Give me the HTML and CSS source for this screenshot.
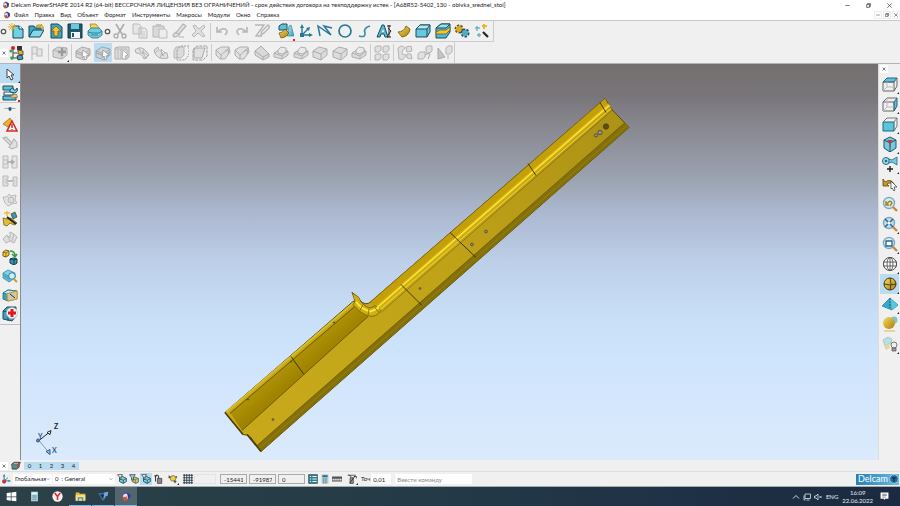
FILE: index.html
```html
<!DOCTYPE html>
<html lang="ru">
<head>
    <meta charset="UTF-8">
    <meta name="viewport" content="width=device-width, initial-scale=1.0">
    <title>Delcam PowerSHAPE 2014 R2</title>
    <link rel="stylesheet" href="styles.css">
</head>
<body>
    <!-- Icon sprite -->
    <svg class="sprite" aria-hidden="true">
        <defs>
            <linearGradient id="g-gold" x1="0" y1="0" x2="1" y2="1">
                <stop offset="0" stop-color="#f6dc63"/>
                <stop offset="1" stop-color="#a87d0c"/>
            </linearGradient>
            <linearGradient id="g-cyan" x1="0" y1="0" x2="1" y2="1">
                <stop offset="0" stop-color="#b5ebf5"/>
                <stop offset="1" stop-color="#2fa5c8"/>
            </linearGradient>
        </defs>
        <symbol id="i-app" viewBox="0 0 16 16">
            <path d="M3 4l5-3 5 3v8l-5 3-5-3z" fill="#4a55a8"/>
            <circle cx="7" cy="8" r="4" fill="#e8e4f2"/>
            <path d="M2 9l6-1 2 5-5 2z" fill="#d0582f"/>
            <path d="M9 3l5 2-1 6-3-1z" fill="#2f3c92"/>
        </symbol>
        <symbol id="i-grip" viewBox="0 0 16 16"><circle cx="8" cy="8" r="5" fill="#fff" stroke="#555" stroke-width="3"/></symbol>
        <symbol id="i-close" viewBox="0 0 16 16"><path d="M4 4l8 8M12 4l-8 8" stroke="#555" stroke-width="2"/></symbol>
        <symbol id="i-new" viewBox="0 0 16 16">
            <path d="M5 3h6l4 3v9H5z" fill="#74cfe2" stroke="#12485a"/>
            <path d="M11 3v3h4" fill="#fff" stroke="#12485a"/>
            <path d="M4 0v8M0 4h8M1 1l6 6M7 1L1 7" stroke="#e3b62b"/>
        </symbol>
        <symbol id="i-open" viewBox="0 0 16 16">
            <path d="M1 14V3h5l1 2h6v3" fill="#3fa7c4" stroke="#12485a"/>
            <path d="M1 14l4-7h11l-4 7z" fill="#83d8e8" stroke="#12485a"/>
            <path d="M8 3q3-3 5 0V1l3 4-4 1 1-1Q11 2 8 4z" fill="#efc12f" stroke="#8a6a10" stroke-width=".5"/>
        </symbol>
        <symbol id="i-import" viewBox="0 0 16 16">
            <path d="M3 1h7l4 3v11H3z" fill="#45a4bd" stroke="#12485a"/>
            <path d="M8 3l5 5h-3v5H6V8H3z" fill="#f2c532" stroke="#6a5210" stroke-width=".7"/>
        </symbol>
        <symbol id="i-save" viewBox="0 0 16 16">
            <path d="M1 1h14v14H1z" fill="#20596b" stroke="#123846"/>
            <path d="M4 1h8v5H4z" fill="#6cc8dc"/><path d="M4 9h9v6H4z" fill="#eef6f8"/>
            <path d="M5 10h2v4H5z" fill="#20596b"/>
        </symbol>
        <symbol id="i-print" viewBox="0 0 16 16">
            <path d="M4 6L3 1h6l4 5z" fill="#f3d24e" stroke="#8a6a10" stroke-width=".6"/>
            <path d="M1 8l3-3h8l3 3v4l-4 3H5l-4-3z" fill="#6fcde1" stroke="#2a7088" stroke-width=".8"/>
            <path d="M1 9l4 1h7l3-2M4 12h7" fill="none" stroke="#2a7088" stroke-width=".8"/>
        </symbol>
        <symbol id="i-cut" viewBox="0 0 16 16">
            <path d="M4 1l6 10M12 1L6 11" stroke="#999" stroke-width="1.5"/>
            <circle cx="4" cy="13" r="2" fill="none" stroke="#999" stroke-width="1.3"/><circle cx="12" cy="13" r="2" fill="none" stroke="#999" stroke-width="1.3"/>
        </symbol>
        <symbol id="i-copy" viewBox="0 0 16 16">
            <path d="M1 1h6l2 2v8H1zM7 5h6l2 2v8H7z" fill="#e4e4e4" stroke="#b0b0b0"/>
            <path d="M9 9h4M9 11h4M9 13h4" stroke="#bbb" stroke-width=".7"/>
        </symbol>
        <symbol id="i-paste" viewBox="0 0 16 16">
            <path d="M1 3h11v11H1z" fill="#d4d4d4" stroke="#aaa"/><path d="M4 1h5v3H4z" fill="#bbb"/>
            <path d="M7 6h6l2 2v7H7z" fill="#ececec" stroke="#b0b0b0"/>
        </symbol>
        <symbol id="i-brush" viewBox="0 0 16 16"><path d="M12 1l3 2-7 8-3-1zM5 9l-3 3 1 2 4-1 2-2M8 14h5" fill="#ddd" stroke="#a5a5a5" stroke-width="1.2"/></symbol>
        <symbol id="i-delete" viewBox="0 0 16 16"><path d="M2 3l2-1 4 4 5-4 1 2-4 4 4 5-2 1-5-4-4 4-2-2 4-4z" fill="#ddd" stroke="#aaa"/></symbol>
        <symbol id="i-undo" viewBox="0 0 16 16"><path d="M3 4v5h5M4 9q3-4 7-3 4 2 0 6" fill="none" stroke="#a8a8a8" stroke-width="1.6"/></symbol>
        <symbol id="i-redo" viewBox="0 0 16 16"><path d="M13 4v5H8M12 9q-3-4-7-3-4 2 0 6" fill="none" stroke="#a8a8a8" stroke-width="1.6"/></symbol>
        <symbol id="i-edit" viewBox="0 0 16 16"><path d="M1 2h9L2 13h6M7 12l1-4 6-6 2 2-6 6z" fill="none" stroke="#a8a8a8" stroke-width="1.4"/></symbol>
        <symbol id="i-model" viewBox="0 0 16 16">
            <path d="M1 3l3-2h5v6H1z" fill="#62bfd5" stroke="#174f63"/>
            <path d="M11 3l2-1 3 11H9z" fill="url(#g-cyan)" stroke="#2a7590" stroke-width=".6"/>
            <path d="M1 10q4 0 6-4l4 4q-3 5-8 5z" fill="url(#g-gold)" stroke="#69500c" stroke-width=".7"/>
        </symbol>
        <symbol id="i-wplane" viewBox="0 0 16 16">
            <path d="M4 12V3M4 12h9M4 12l6-6" stroke="#24789a" stroke-width="1.4"/>
            <path d="M4 1l2 4H2zM15 12l-4 2v-4zM12 4l-1 4-3-3zM2 10h4v4H2z" fill="#24789a"/>
        </symbol>
        <symbol id="i-line" viewBox="0 0 16 16"><path d="M3 13L1 3l13 9-7-9 8 2" fill="none" stroke="#24789a" stroke-width="1.5"/></symbol>
        <symbol id="i-arc" viewBox="0 0 16 16"><circle cx="8" cy="8" r="6" fill="none" stroke="#24789a" stroke-width="1.7"/></symbol>
        <symbol id="i-curve" viewBox="0 0 16 16"><path d="M3 13q7 2 6-3-2-5 5-7" fill="none" stroke="#2e8cab" stroke-width="1.6"/></symbol>
        <symbol id="i-text" viewBox="0 0 16 16">
            <path d="M1 14L6 2h2l4 12H9l-1-3H5l-1 3z" fill="#56b7cf" stroke="#174f63"/><path d="M6 9l1-3 1 3z" fill="#fff"/>
            <path d="M13 2v12M11 3h4M11 14h4M12 5l3 3-3 4" fill="none" stroke="#222"/>
        </symbol>
        <symbol id="i-surf" viewBox="0 0 16 16"><path d="M2 9q6 0 8-6l4 3q-1 7-8 8z" fill="url(#g-gold)" stroke="#8a6a10"/></symbol>
        <symbol id="i-solid" viewBox="0 0 16 16">
            <path d="M1 6l4-4h10v7l-3 5H1z" fill="#67c8de" stroke="#1c4c5d"/><path d="M1 6l4-4h10l-3 4z" fill="#b3e9f3" stroke="#1c4c5d"/>
            <path d="M12 6v8" stroke="#1c4c5d"/>
        </symbol>
        <symbol id="i-feat" viewBox="0 0 16 16">
            <path d="M1 5l5-4h9v8l-4 6H1z" fill="#54b9d0" stroke="#1c4c5d"/><path d="M1 5l5-4h9l-4 4z" fill="#98dfec" stroke="#1c4c5d"/>
            <path d="M1 9l4-2h6l4-3v3l-4 4H1z" fill="#f0c531" stroke="#69500c" stroke-width=".7"/>
        </symbol>
        <symbol id="i-gears" viewBox="0 0 16 16">
            <circle cx="5" cy="6" r="3" fill="none" stroke="#6b510e" stroke-width="3" stroke-dasharray="2 1"/><circle cx="5" cy="6" r="3" fill="#d9a826"/>
            <circle cx="11" cy="10" r="3" fill="none" stroke="#174f63" stroke-width="3" stroke-dasharray="2 1"/><circle cx="11" cy="10" r="3" fill="#4cadc7"/>
        </symbol>
        <symbol id="i-wand" viewBox="0 0 16 16">
            <path d="M9 9l5 5" stroke="#222" stroke-width="2.2"/><path d="M10 1v5M8 3h5" stroke="#e5b92d" stroke-width="2"/>
            <path d="M3 3v5M1 5h5M5 10v4M3 12h4" stroke="#6db4c4" stroke-width="1.5"/>
        </symbol>
        <symbol id="i-tree" viewBox="0 0 16 16">
            <path d="M4 4v9h5M4 8h4" fill="none" stroke="#444"/><circle cx="4" cy="3" r="2" fill="#d0242c"/><circle cx="2" cy="6" r="1.6" fill="#3aa24a"/>
            <path d="M8 1h5v4H8z" fill="#333"/><path d="M9 5l5 1v4l-5-1z" fill="#e0b42c" stroke="#333" stroke-width=".8"/>
            <path d="M8 11l5-1 1 4-5 1z" fill="#3b9fba" stroke="#222" stroke-width=".8"/><path d="M1 12l3-1 1 3-3 1z" fill="#3aa24a"/>
        </symbol>
        <symbol id="i-flag" viewBox="0 0 16 16"><path d="M3 15V2h5v2h5v7H8V9H3M8 2v9" fill="#e3e3e3" stroke="#b0b0b0" stroke-width="1.2"/></symbol>
        <symbol id="i-gcross" viewBox="0 0 16 16">
            <path d="M1 5l5-3 9 1v7l-5 4-9-2z" fill="#d2d2d2" stroke="#a0a0a0"/><path d="M1 5l9 2 5-4M10 7v7" fill="none" stroke="#a0a0a0"/>
            <path d="M10 3v8M6 7h8" stroke="#858585" stroke-width="2.4"/>
        </symbol>
        <symbol id="i-gbox" viewBox="0 0 16 16">
            <path d="M1 6l6-4 8 2v6l-6 5-8-3z" fill="#d8d8d8" stroke="#9c9c9c"/><path d="M1 6l8 3 6-5M9 9v6" fill="none" stroke="#9c9c9c"/>
        </symbol>
        <symbol id="i-gboxcur" viewBox="0 0 16 16">
            <path d="M1 6l6-4 8 2v6l-6 5-8-3z" fill="#d0d0d0" stroke="#999"/><path d="M1 6l8 3 6-5M1 8l8 3 6-4" fill="none" stroke="#999"/>
            <path d="M8 5l6 5-3 1 1 3-2 1-1-4-2 2z" fill="#fff" stroke="#777" stroke-width=".7"/>
        </symbol>
        <symbol id="i-gpanel" viewBox="0 0 16 16">
            <path d="M1 3l3-1h11v10l-2 2H1z" fill="#ddd" stroke="#a0a0a0"/><path d="M4 4v10M7 4v10M1 4h12v10" fill="none" stroke="#a8a8a8"/>
            <path d="M9 5l5 5-3 1 1 3-2 0-2-1z" fill="#fff" stroke="#888" stroke-width=".7"/>
        </symbol>
        <symbol id="i-gbend" viewBox="0 0 16 16">
            <path d="M1 5q6-5 11 1l3 4-5 4q-2-6-8-6z" fill="#ddd" stroke="#a0a0a0"/><path d="M5 3l2 5M10 4l-2 5" stroke="#a8a8a8"/>
            <path d="M9 7l5 4-2 1v2z" fill="#fff" stroke="#888" stroke-width=".7"/>
        </symbol>
        <symbol id="i-gbend2" viewBox="0 0 16 16">
            <path d="M1 5l4-3q0 5 9 6l1 5q-12 3-14-8z" fill="#ddd" stroke="#a0a0a0"/><path d="M9 7l-2 6M5 5l-3 3" stroke="#a8a8a8"/>
            <path d="M8 4l4 4-2 1v2z" fill="#fff" stroke="#888" stroke-width=".7"/>
        </symbol>
        <symbol id="i-gdash" viewBox="0 0 16 16">
            <path d="M3 2h8v8l-3 3H1V6z" fill="#d6d6d6" stroke="#aaa"/><path d="M4 5l3-4h9v9l-4 5H4z" fill="none" stroke="#888" stroke-dasharray="2 1"/>
        </symbol>
        <symbol id="i-gdash2" viewBox="0 0 16 16">
            <path d="M2 3h11l-3 10H2z" fill="#ddd" stroke="#999"/><path d="M1 5l4-4h10v10l-4 4H1z" fill="none" stroke="#888" stroke-dasharray="3 1"/>
        </symbol>
        <symbol id="i-gcut" viewBox="0 0 16 16">
            <path d="M1 5l5-3h8l1 5-5 7-5 0-4-4z" fill="#ddd" stroke="#a0a0a0"/><path d="M1 5l5 5 8-7M6 10v4M10 6l4-1-1 4" fill="none" stroke="#a0a0a0"/>
        </symbol>
        <symbol id="i-gwedge" viewBox="0 0 16 16">
            <path d="M1 6l6-5 8 8v3l-6 3-8-5z" fill="#d4d4d4" stroke="#999"/><path d="M1 6l8 6 6-3M9 12v3" fill="none" stroke="#999"/>
        </symbol>
        <symbol id="i-gslab" viewBox="0 0 16 16">
            <path d="M1 8l5-3 9 1v4l-6 4-8-2z" fill="#d6d6d6" stroke="#a0a0a0"/><path d="M1 8l8 3 6-5M9 11v3" fill="none" stroke="#a0a0a0"/>
            <path d="M5 5l3-3 5 1v4l-4 2-4-1z" fill="#e8e8e8" stroke="#a0a0a0"/>
        </symbol>
        <symbol id="i-gcubes" viewBox="0 0 16 16">
            <path d="M1 2l2-1h4v4L5 7H1zM9 2l2-1h4v4l-2 2H9zM1 10l2-1h4v4l-2 2H1zM9 10l2-1h4v4l-2 2H9z" fill="#ddd" stroke="#a5a5a5"/>
        </symbol>
        <symbol id="i-gbool" viewBox="0 0 16 16">
            <path d="M1 3q4-4 7 0-4 3-3 6l4 1q-2 6-7 4zM9 2l5-1 1 5-5 1zM10 9l4 0 1 5-5-1z" fill="#ddd" stroke="#a5a5a5"/>
        </symbol>
        <symbol id="i-gpair" viewBox="0 0 16 16">
            <path d="M1 9l2-2h5v5l-2 2H1zM9 2l2-1h4v5l-2 2H9z" fill="#ddd" stroke="#a5a5a5"/><path d="M8 10l5-2M11 14l2-5" stroke="#999"/>
        </symbol>
        <symbol id="i-gcone" viewBox="0 0 16 16">
            <path d="M1 3l7 9-7 2z" fill="#bbb" stroke="#999"/><path d="M9 3l2-2h4v6l-2 2H9zM11 10v4" fill="#ddd" stroke="#a5a5a5"/>
        </symbol>
        <symbol id="i-arrow" viewBox="0 0 16 16"><path d="M5 3v9l2-2 2 4 2-1-2-4h3z" fill="#fff" stroke="#444"/></symbol>
        <symbol id="i-filter" viewBox="0 0 16 16">
            <path d="M1 1h10v4H1zM1 11h13v4H1z" fill="#62bfd5" stroke="#174f63"/><path d="M2 7h9v3H2z" fill="#fff" stroke="#1d5468"/>
            <path d="M8 5q2-3 3-2l1 2 2 0 1-2q2 3-2 5l-5-1z" fill="#7fcfe0" stroke="#174f63"/><path d="M8 11l6-2 2 3-5 1z" fill="#e3c487" stroke="#7b5a22" stroke-width=".6"/>
        </symbol>
        <symbol id="i-slider" viewBox="0 0 16 16"><path d="M0 8h16" stroke="#888"/><path d="M6 6h4l0 4-2 2-2-2z" fill="#1f5b78"/></symbol>
        <symbol id="i-warn" viewBox="0 0 16 16">
            <path d="M1 8l7-6 2 4-4 5z" fill="#e9b42f" stroke="#7b5a12" stroke-width=".6"/>
            <path d="M10 5l5 10H5z" fill="#fff" stroke="#d62a26" stroke-width="1.6"/><path d="M10 8v4M10 13v1" stroke="#b01c1a" stroke-width="1.3"/>
        </symbol>
        <symbol id="i-gtrim" viewBox="0 0 16 16"><path d="M1 3l3-1 6 6-2 2zM9 9l3-5 3 4 0 4-5 2-3-2z" fill="#ddd" stroke="#a5a5a5" stroke-width="1.1"/></symbol>
        <symbol id="i-gtrans" viewBox="0 0 16 16"><path d="M1 2h5v12H1zM10 2h5v12h-5zM1 6h5M1 10h5" fill="#e2e2e2" stroke="#aeaeae"/><path d="M5 8h6M9 6l3 2-3 2" fill="none" stroke="#999" stroke-width="1.3"/></symbol>
        <symbol id="i-gmirror" viewBox="0 0 16 16"><path d="M1 3h5v3H4v4h2v3H1zM15 4h-4v3h1v3h-1v3h4z" fill="#ddd" stroke="#aeaeae"/><path d="M5 8h6" stroke="#999" stroke-width="1.5"/></symbol>
        <symbol id="i-gmorph" viewBox="0 0 16 16"><path d="M1 5l4 0 2-3 2 2 5-1-1 5 2 3-5 1-4 2-3-3z" fill="#e0e0e0" stroke="#aeaeae"/><circle cx="9" cy="8" r="3" fill="#d8d8d8" stroke="#aaa"/></symbol>
        <symbol id="i-magic" viewBox="0 0 16 16">
            <path d="M9 3l4-2 2 5-4 2z" fill="#3c97b3" stroke="#454208" stroke-width=".7"/><path d="M1 7l4 1 4-1 6 5-3 2-4-2-3 3-3-1z" fill="#e3bb32" stroke="#6b510e" stroke-width=".7"/>
            <path d="M5 6l9 7" stroke="#222" stroke-width="2"/><path d="M5 0v5M2 2h6" stroke="#ecbc31" stroke-width="1.4"/>
        </symbol>
        <symbol id="i-gwrap" viewBox="0 0 16 16"><path d="M1 9l4-4 3 3V2l4 2 3 3-3 6-4-2-4 2z" fill="#dcdcdc" stroke="#a9a9a9"/><path d="M5 5l3 6M12 4l-2 7" stroke="#aaa"/></symbol>
        <symbol id="i-convert" viewBox="0 0 16 16">
            <path d="M1 3l3-2 3 1v4l-3 2-3-1z" fill="#f0cb47" stroke="#7a600f"/><path d="M1 3l3 1 3-2M4 4v4" fill="none" stroke="#7a600f" stroke-width=".8"/>
            <path d="M8 2q5 0 5 5M10 5l3 3 2-3" fill="none" stroke="#3b9a45" stroke-width="1.6"/>
            <path d="M8 10l3-1 4 1v4l-3 2-4-2z" fill="#3199b6" stroke="#123f50"/><path d="M8 10l4 1 3-1M12 11v5" fill="none" stroke="#123f50"/>
        </symbol>
        <symbol id="i-inspect" viewBox="0 0 16 16">
            <path d="M1 5l5-3 7 3v5l-6 4-6-4z" fill="#7ed0e2" stroke="#2c8fae" stroke-width=".8"/><path d="M1 5l6 4 6-4M1 7l6 4M7 9v5M3 6v5M5 7v5" fill="none" stroke="#2c8fae" stroke-width=".7"/>
            <circle cx="10" cy="8" r="3.3" fill="#cdeef6" stroke="#2f7fa5"/><path d="M12 11l3 3" stroke="#d69a2a" stroke-width="2.2"/>
        </symbol>
        <symbol id="i-block" viewBox="0 0 16 16">
            <path d="M1 6l5-3 9 1v8l-9 2-5-2z" fill="#3aa0bb" stroke="#246a7e" stroke-width=".8"/><path d="M1 6l5-3 9 1-10 3z" fill="#c0e6ef" stroke="#246a7e" stroke-width=".8"/>
            <path d="M5 7l10-3v8l-9 2z" fill="#cfc8a8" stroke="#d2a020"/><path d="M8 7l5 4" stroke="#333"/>
        </symbol>
        <symbol id="i-doctor" viewBox="0 0 16 16">
            <path d="M1 5l4-4h9v9l-4 5-9-2z" fill="#3f9fb8" stroke="#174f63"/><path d="M1 5l5 1v9" fill="none" stroke="#174f63"/>
            <circle cx="10" cy="7" r="5.5" fill="#f4f4f4" stroke="#bbb" stroke-width=".6"/><path d="M10 3v8M6 7h8" stroke="#e01822" stroke-width="3"/>
        </symbol>
        <symbol id="i-vtop" viewBox="0 0 16 16">
            <path d="M1 6l4-4h10l-3 4z" fill="#58c6df" stroke="#246579"/><path d="M1 6h11v9H1zM15 2v8l-3 5" fill="none" stroke="#666"/><path d="M5 6v5h7M5 11l-4 4" fill="none" stroke="#bbb"/>
        </symbol>
        <symbol id="i-vside" viewBox="0 0 16 16">
            <path d="M12 6l3-4v8l-3 5z" fill="#58c6df" stroke="#246579"/><path d="M1 6l4-4h10M1 6h11v9H1z" fill="none" stroke="#666"/><path d="M5 2v9h7M5 11l-4 4" fill="none" stroke="#bbb"/>
        </symbol>
        <symbol id="i-vfront" viewBox="0 0 16 16">
            <path d="M1 6h11v9H1z" fill="#58c6df" stroke="#246579"/><path d="M1 6l4-4h10l-3 4M15 2v8l-3 5" fill="none" stroke="#777"/>
        </symbol>
        <symbol id="i-viso" viewBox="0 0 16 16">
            <path d="M2 4l6-3 6 3v8l-6 4-6-4z" fill="#72cbe0" stroke="#1f5568"/><path d="M2 4l6 3 6-3M8 7v9" fill="none" stroke="#1f5568"/>
            <path d="M5 4h6L8 7z" fill="#d62f36"/><path d="M8 5v6" stroke="#d62f36"/>
        </symbol>
        <symbol id="i-spin" viewBox="0 0 16 16">
            <circle cx="4" cy="5" r="3.5" fill="#9edcea" stroke="#26687f"/><circle cx="4" cy="5" r="1.3" fill="#26687f"/>
            <path d="M7 3l3 1 5-3v8l-5-3-3 1z" fill="#77cadd" stroke="#26687f" stroke-width=".8"/><path d="M8 10v6M5 13h6" stroke="#222" stroke-width="1.4"/>
        </symbol>
        <symbol id="i-vundo" viewBox="0 0 16 16">
            <path d="M1 3v7h6l-2-2q4-3 6 2l1-2q-3-6-9-2z" fill="#c59a25" stroke="#5b4508" stroke-width=".8"/><path d="M9 5l6 6-3 0 1 3-1 1-2-3-1 1z" fill="#fff" stroke="#333" stroke-width=".7"/>
        </symbol>
        <symbol id="i-zprev" viewBox="0 0 16 16">
            <circle cx="7" cy="7" r="5.5" fill="#d5edf8" stroke="#7aa9c6" stroke-width="1.4"/><path d="M11 11l4 4" stroke="#d08338" stroke-width="2.4"/>
            <path d="M4 5v4h3M5 8q3-5 5-1l-2 3" fill="none" stroke="#a98410" stroke-width="1.5"/>
        </symbol>
        <symbol id="i-zfit" viewBox="0 0 16 16">
            <circle cx="7" cy="7" r="5.5" fill="#c2ddec" stroke="#7aa9c6" stroke-width="1.4"/><path d="M11 11l4 4" stroke="#d08338" stroke-width="2.4"/>
            <path d="M3 3l8 8M11 3l-8 8" stroke="#2d6484" stroke-width="1.5"/><circle cx="7" cy="7" r="1.5" fill="#fff"/>
        </symbol>
        <symbol id="i-zbox" viewBox="0 0 16 16">
            <circle cx="7" cy="7" r="5.5" fill="#d5edf8" stroke="#7aa9c6" stroke-width="1.4"/><path d="M11 11l4 4" stroke="#d08338" stroke-width="2.4"/>
            <path d="M4 5h6v5H4z" fill="#fff" stroke="#2d6484" stroke-width="1.3"/>
        </symbol>
        <symbol id="i-wire" viewBox="0 0 16 16"><circle cx="8" cy="8" r="6.5" fill="#fff" stroke="#444"/><ellipse cx="8" cy="8" rx="3" ry="6.5" fill="none" stroke="#444" stroke-width=".8"/><path d="M8 1v14M1 6h14M1 10h14" stroke="#444" stroke-width=".8"/></symbol>
        <symbol id="i-shade" viewBox="0 0 16 16"><circle cx="8" cy="8" r="6" fill="url(#g-gold)" stroke="#443608"/><path d="M8 2q2 6 0 12M2 8q6 2 12 0" fill="none" stroke="#443608" stroke-width=".9"/></symbol>
        <symbol id="i-pyr" viewBox="0 0 16 16"><path d="M8 2l8 7-6 5-10-4z" fill="#35a9ca" stroke="#2a86a2" stroke-width=".8"/><path d="M8 2l2 12 6-5z" fill="#5cc3db"/><path d="M8 2v10" stroke="#185d75" stroke-dasharray="2 1"/></symbol>
        <symbol id="i-ball" viewBox="0 0 16 16"><circle cx="12" cy="4" r="3.5" fill="#7cc5d3"/><circle cx="7" cy="7" r="6" fill="url(#g-gold)"/><path d="M2 15h11" stroke="#e1cf8c" stroke-width="1.6"/></symbol>
        <symbol id="i-light" viewBox="0 0 16 16"><path d="M1 4l5-3 4 2-1 4-6 3z" fill="#b9dfe2" stroke="#8fb4b6" stroke-width=".6"/><path d="M2 10l5-2 1 4-4 2z" fill="#e9d692"/><circle cx="12" cy="9" r="3" fill="#eee" stroke="#777"/><path d="M10 12h4v3h-4z" fill="#999" stroke="#555" stroke-width=".7"/></symbol>
        <symbol id="i-layers" viewBox="0 0 16 16"><path d="M1 5l4-3h10l-2 4v4l-4 3H2z" fill="#6d7a78" stroke="#222"/><path d="M2 7h8v4H3z" fill="#3f9a98"/><path d="M10 3l5 0-2 6-3 1z" fill="#9a4d3c"/><path d="M5 4h6" stroke="#ddd"/></symbol>
        <symbol id="i-axes" viewBox="0 0 16 16"><path d="M5 11V2M5 11h9M5 11l6-5" stroke="#2a83a4" stroke-width="1.6"/><path d="M5 0l2 4H3zM16 11l-4 2V9z" fill="#2a83a4"/><circle cx="5" cy="12" r="3.4" fill="#c93340"/></symbol>
        <symbol id="i-box1" viewBox="0 0 16 16">
            <path d="M4 6l5-2 6 3v5l-5 3-6-3z" fill="#7fcfe0" stroke="#174452" stroke-width="1.3"/><path d="M4 7l6 3 5-3M10 10v5" fill="none" stroke="#174452" stroke-width="1.1"/>
            <path d="M1 1h8L6 5v4L4 8V5z" fill="#e9f5f8" stroke="#222"/>
        </symbol>
        <symbol id="i-box2" viewBox="0 0 16 16">
            <path d="M5 7l4-2 6 2v6l-4 2-6-3z" fill="#e6c353" stroke="#2c6474" stroke-width="1.3"/><path d="M5 7l5 2 5-2M10 9v6" fill="none" stroke="#2c6474"/>
            <path d="M1 1h9L7 6v4L4 9V6z" fill="#8bd3e1" stroke="#222"/>
        </symbol>
        <symbol id="i-lock" viewBox="0 0 16 16"><path d="M7 7h7v8H7z" fill="#8b8b8b" stroke="#222"/><path d="M4 12V3q2-3 5 0v4M2 3h5" fill="none" stroke="#222" stroke-width="1.4"/></symbol>
        <symbol id="i-bulb" viewBox="0 0 16 16"><circle cx="8" cy="7" r="4.5" fill="#f0cf3a" stroke="#555"/><path d="M1 2l4 3-4 2zM9 10l5 1-3 4zM12 3l3 1-2 3z" fill="#444"/></symbol>
        <symbol id="i-grid" viewBox="0 0 16 16"><path d="M1 1h14v14H1z" fill="#fff"/><path d="M2 0v16M6 0v16M10 0v16M14 0v16M0 2h16M0 6h16M0 10h16M0 14h16" stroke="#234" stroke-width="1.4"/></symbol>
        <symbol id="i-list" viewBox="0 0 16 16"><path d="M1 1h14v14H1z" fill="#2f7c8c" stroke="#123f4a"/><path d="M3 4h2M7 4h7M3 8h2M7 8h7M3 12h2M7 12h7" stroke="#e6f7fa" stroke-width="1.7"/></symbol>
        <symbol id="i-calc" viewBox="0 0 16 16"><path d="M3 1h10v14H3z" fill="#a9cad3" stroke="#bcc"/><path d="M4 2h8v3H4z" fill="#1d7089"/><path d="M5 8h6M5 11h6M5 14h6" stroke="#47626c" stroke-width="1.4" stroke-dasharray="1.5 1"/></symbol>
        <symbol id="i-ruler" viewBox="0 0 16 16"><path d="M0 4h16v8H0z" fill="#555"/><path d="M1 9h14" stroke="#fff" stroke-width="3" stroke-dasharray="2 1"/></symbol>
        <symbol id="i-snap" viewBox="0 0 16 16"><path d="M1 2h13M5 6h5v9H5z" fill="#999" stroke="#333" stroke-width="1.2"/><path d="M4 15L13 3M3 1l4 4M11 4h4v3" fill="none" stroke="#222" stroke-width="1.2"/></symbol>
        <symbol id="i-win" viewBox="0 0 16 16"><path d="M1 3l6-1v6H1zM8 2l7-1v7H8zM1 9h6v5l-6-1zM8 9h7v6l-7-1z" fill="#fff"/></symbol>
        <symbol id="i-note" viewBox="0 0 16 16"><path d="M3 1h10v14H3z" fill="#a9cedb"/><path d="M4 2h8v3H4z" fill="#e3f3f7"/><path d="M5 7h6M5 9h6M5 12h6" stroke="#54859a"/></symbol>
        <symbol id="i-yandex" viewBox="0 0 16 16"><circle cx="8" cy="8" r="7.5" fill="#f7f3f1"/><path d="M4 3l4 5v5M12 3L8 8" fill="none" stroke="#e0252b" stroke-width="2.3"/></symbol>
        <symbol id="i-folder" viewBox="0 0 16 16"><path d="M1 2h5l1 2h8v10H1z" fill="#e8b93b"/><path d="M1 6h14v8H1z" fill="#fbdf83"/><path d="M4 9h8v5h-2v-3H6v3H4z" fill="#3d8fd0"/></symbol>
        <symbol id="i-pm" viewBox="0 0 16 16"><path d="M0 3h11L7 15z" fill="#3a6fa8"/><path d="M3 5h6L7 11z" fill="#16294d"/><path d="M9 2l6-1-1 6-3 1-3 6z" fill="#70a6d8"/></symbol>
        <symbol id="i-up" viewBox="0 0 16 16"><path d="M2 11l6-6 6 6" fill="none" stroke="#e8edf2" stroke-width="1.8"/></symbol>
        <symbol id="i-net" viewBox="0 0 16 16"><path d="M4 2h11v9H4zM7 14h6M2 5v9h3" fill="none" stroke="#e8edf2" stroke-width="1.5"/></symbol>
        <symbol id="i-mute" viewBox="0 0 16 16"><path d="M1 6h3l4-4v12l-4-4H1zM11 6l4 4M15 6l-4 4" fill="none" stroke="#e8edf2" stroke-width="1.5"/></symbol>
        <symbol id="i-msg" viewBox="0 0 16 16"><path d="M1 1h14v11H9l-2 3v-3H1z" fill="#fff"/><path d="M4 4h8M4 6h8M4 9h6" stroke="#26384c"/></symbol>
        <symbol id="i-down" viewBox="0 0 16 16"><path d="M2 5l6 6 6-6" fill="none" stroke="#555" stroke-width="2"/></symbol>
        <symbol id="i-min" viewBox="0 0 16 16"><path d="M1 8h14" stroke="#333" stroke-width="2"/></symbol>
        <symbol id="i-max" viewBox="0 0 16 16"><path d="M2 5h9v9H2zM5 5V2h9v9h-3" fill="none" stroke="#222" stroke-width="2"/></symbol>
        <symbol id="i-x" viewBox="0 0 16 16"><path d="M1 1l14 14M15 1L1 15" stroke="#222" stroke-width="2"/></symbol>
    </svg>

    <header>
        <div class="titlebar">
            <svg class="app-icon"><use href="#i-app"/></svg>
            <h1>Delcam PowerSHAPE 2014 R2 (64-bit) БЕССРОЧНАЯ ЛИЦЕНЗИЯ БЕЗ ОГРАНИЧЕНИЙ - срок действия договора на техподдержку истек - [A68R52-5402_130 - obivka_srednei_stoi]</h1>
            <div class="win-buttons">
                <button aria-label="Свернуть"><svg><use href="#i-min"/></svg></button>
                <button aria-label="Развернуть"><svg><use href="#i-max"/></svg></button>
                <button aria-label="Закрыть"><svg><use href="#i-x"/></svg></button>
            </div>
        </div>
        <nav class="menubar">
            <svg class="app-icon"><use href="#i-app"/></svg>
            <button>Файл</button>
            <button>Правка</button>
            <button>Вид</button>
            <button>Объект</button>
            <button>Формат</button>
            <button>Инструменты</button>
            <button>Макросы</button>
            <button>Модули</button>
            <button>Окно</button>
            <button>Справка</button>
            <div class="doc-buttons">
                <button aria-label="Свернуть документ"><svg><use href="#i-min"/></svg></button>
                <button aria-label="Восстановить документ"><svg><use href="#i-max"/></svg></button>
                <button aria-label="Закрыть документ"><svg><use href="#i-x"/></svg></button>
            </div>
        </nav>
    </header>

    <!-- Horizontal toolbars -->
    <div class="toolbars">
        <div class="toolbar">
            <svg class="grip"><use href="#i-grip"/></svg>
            <div class="group five">
                <button aria-label="Новый"><svg><use href="#i-new"/></svg></button>
                <button aria-label="Открыть"><svg><use href="#i-open"/></svg></button>
                <button aria-label="Импорт"><svg><use href="#i-import"/></svg></button>
                <button aria-label="Сохранить"><svg><use href="#i-save"/></svg></button>
                <button aria-label="Печать"><svg><use href="#i-print"/></svg></button>
            </div>
            <svg class="grip"><use href="#i-grip"/></svg>
            <div class="group five">
                <button disabled aria-label="Вырезать"><svg><use href="#i-cut"/></svg></button>
                <button disabled aria-label="Копировать"><svg><use href="#i-copy"/></svg></button>
                <button disabled aria-label="Вставить"><svg><use href="#i-paste"/></svg></button>
                <button disabled aria-label="Формат по образцу"><svg><use href="#i-brush"/></svg></button>
                <button disabled aria-label="Удалить"><svg><use href="#i-delete"/></svg></button>
            </div>
            <span class="sep"></span>
            <div class="group three">
                <button disabled aria-label="Отменить"><svg><use href="#i-undo"/></svg></button>
                <button disabled aria-label="Вернуть"><svg><use href="#i-redo"/></svg></button>
                <button disabled aria-label="Изменить"><svg><use href="#i-edit"/></svg></button>
            </div>
            <div class="group eleven">
                <button class="more red" aria-label="Модель"><svg><use href="#i-model"/></svg></button>
                <button aria-label="Рабочая плоскость"><svg><use href="#i-wplane"/></svg></button>
                <button aria-label="Линия"><svg><use href="#i-line"/></svg></button>
                <button aria-label="Дуга"><svg><use href="#i-arc"/></svg></button>
                <button aria-label="Кривая"><svg><use href="#i-curve"/></svg></button>
                <button aria-label="Текст"><svg><use href="#i-text"/></svg></button>
                <button aria-label="Поверхность"><svg><use href="#i-surf"/></svg></button>
                <button aria-label="Твёрдое тело"><svg><use href="#i-solid"/></svg></button>
                <button aria-label="Элемент тела"><svg><use href="#i-feat"/></svg></button>
                <button aria-label="Сборка"><svg><use href="#i-gears"/></svg></button>
                <button aria-label="Мастер"><svg><use href="#i-wand"/></svg></button>
            </div>
        </div>
        <div class="toolbar second">
            <button class="close" aria-label="Закрыть панель"><svg><use href="#i-close"/></svg></button>
            <div class="group two">
                <button aria-label="Дерево"><svg><use href="#i-tree"/></svg></button>
                <button disabled aria-label="Флаг"><svg><use href="#i-flag"/></svg></button>
            </div>
            <span class="sep"></span>
            <button disabled class="more" aria-label="Добавить"><svg><use href="#i-gcross"/></svg></button>
            <span class="sep"></span>
            <div class="group seven">
                <button disabled aria-label="Выбор тела"><svg><use href="#i-gboxcur"/></svg></button>
                <button disabled class="active" aria-label="Выбор грани"><svg><use href="#i-gboxcur"/></svg></button>
                <button disabled aria-label="Панель"><svg><use href="#i-gpanel"/></svg></button>
                <button disabled aria-label="Изгиб"><svg><use href="#i-gbend"/></svg></button>
                <button disabled aria-label="Обратный изгиб"><svg><use href="#i-gbend2"/></svg></button>
                <button disabled aria-label="Контур"><svg><use href="#i-gdash"/></svg></button>
                <button disabled aria-label="Область"><svg><use href="#i-gdash2"/></svg></button>
            </div>
            <span class="sep"></span>
            <div class="group eight">
                <button disabled aria-label="Вырез"><svg><use href="#i-gcut"/></svg></button>
                <button disabled aria-label="Разрез"><svg><use href="#i-gcut"/></svg></button>
                <button disabled aria-label="Клин"><svg><use href="#i-gwedge"/></svg></button>
                <button disabled aria-label="Выступ"><svg><use href="#i-gslab"/></svg></button>
                <button disabled aria-label="Карман"><svg><use href="#i-gslab"/></svg></button>
                <button disabled aria-label="Оболочка"><svg><use href="#i-gbox"/></svg></button>
                <button disabled aria-label="Скругление"><svg><use href="#i-gbox"/></svg></button>
                <button disabled aria-label="Утолщение"><svg><use href="#i-gslab"/></svg></button>
            </div>
            <span class="sep"></span>
            <button disabled aria-label="Массив"><svg><use href="#i-gcubes"/></svg></button>
            <span class="sep"></span>
            <div class="group three">
                <button disabled aria-label="Объединить"><svg><use href="#i-gbool"/></svg></button>
                <button disabled aria-label="Вычесть"><svg><use href="#i-gpair"/></svg></button>
                <button disabled aria-label="Пересечь"><svg><use href="#i-gcone"/></svg></button>
            </div>
        </div>
    </div>

    <main>
        <aside class="side left">
            <div class="side-tools">
                <button class="active more" aria-label="Выбор"><svg><use href="#i-arrow"/></svg></button>
                <button class="more red" aria-label="Фильтр"><svg><use href="#i-filter"/></svg></button>
                <svg class="slider"><use href="#i-slider"/></svg>
                <button aria-label="Ошибки"><svg><use href="#i-warn"/></svg></button>
                <button disabled aria-label="Обрезка"><svg><use href="#i-gtrim"/></svg></button>
                <button disabled aria-label="Перенос"><svg><use href="#i-gtrans"/></svg></button>
                <button disabled aria-label="Отражение"><svg><use href="#i-gmirror"/></svg></button>
                <button disabled aria-label="Морфинг"><svg><use href="#i-gmorph"/></svg></button>
                <button aria-label="Мастер поверхностей"><svg><use href="#i-magic"/></svg></button>
                <button disabled aria-label="Обёртка"><svg><use href="#i-gwrap"/></svg></button>
                <button aria-label="Преобразовать"><svg><use href="#i-convert"/></svg></button>
                <button aria-label="Проверка"><svg><use href="#i-inspect"/></svg></button>
                <button aria-label="Заготовка"><svg><use href="#i-block"/></svg></button>
                <button aria-label="Доктор"><svg><use href="#i-doctor"/></svg></button>
            </div>
        </aside>

        <section class="viewport">
            <svg class="scene" viewBox="21 64 857 395" role="img" aria-label="obivka_srednei_stoi">
                <defs>
                    <linearGradient id="face" gradientUnits="userSpaceOnUse" x1="600" y1="110" x2="300" y2="400">
                        <stop offset="0" stop-color="#ad9316"/>
                        <stop offset=".5" stop-color="#c0a218"/>
                        <stop offset="1" stop-color="#c6a81a"/>
                    </linearGradient>
                    <linearGradient id="recess" gradientUnits="userSpaceOnUse" x1="290" y1="357" x2="305" y2="374">
                        <stop offset="0" stop-color="#b09406"/>
                        <stop offset="1" stop-color="#9c8000"/>
                    </linearGradient>
                </defs>
                <!-- body of the part -->
                <path d="M225 412L353 301L356 300L352 292Q357 295 360 300Q366 306 371 301L605 98L611 108L629 127L261 451L254 441L249 435L243 434Z" fill="url(#face)" stroke="#5a4a05" stroke-width="1"/>
                <!-- lower rim -->
                <path d="M257 445L625 122L629 127L261 451Z" fill="#84700a"/>
                <path d="M257 445L625 122" stroke="#685506" stroke-width=".7"/>
                <path d="M259 448L627 125" stroke="#98800c" stroke-width="1"/>
                <!-- recess -->
                <path d="M230 412L355 305L368 316L242 430Z" fill="url(#recess)"/>
                <path d="M226 412L354 302" stroke="#d6bb2c" stroke-width="2"/>
                <path d="M230 413L356 305M368 316L242 430" stroke="#574604" stroke-width=".7"/>
                <path d="M225 412L243 434M247 434L261 451" stroke="#4c3d04" stroke-width="1.6"/>
                <!-- upper flange -->
                <path d="M371 301L605 98L608 104L374 308Z" fill="#c39f0a"/>
                <path d="M368 312Q373 314 379 309L611 106L608 103L374 307Q368 310 362 308Z" fill="#d2ae10"/>
                <path d="M376 308L609 105" stroke="#fbe53a" stroke-width="1.6"/>
                <path d="M378 311L611 108" stroke="#ecd02a" stroke-width="1.1"/>
                <path d="M381 312L612 110M371 301L605 98" stroke="#7d6707" stroke-width=".6"/>
                <!-- fillet -->
                <path d="M352 292L355 301L353 304Q359 312 367 315Q376 318 381 310L375 305Q371 309 366 306Q360 302 359 297Z" fill="#d1ae12" stroke="#6c5806" stroke-width=".7"/>
                <path d="M356 301Q361 309 371 311L379 307" fill="none" stroke="#fbe53a" stroke-width="2"/>
                <path d="M363 304L360 310M369 308L368 315M374 306L379 312" stroke="#6c5806" stroke-width=".7"/>
                <!-- section lines -->
                <path d="M528 163L536 175M450 232L476 257M401 284L422 305M291 356L304 374M600 102L606 112" stroke="#352b04" stroke-width=".9"/>
                <g fill="#8d9094" stroke="#3f3a22" stroke-width=".7">
                    <circle cx="606" cy="126" r="2.7" fill="#5c4e10"/>
                    <circle cx="600" cy="132" r="2.2"/>
                    <circle cx="596" cy="135" r="1.6"/>
                    <circle cx="486" cy="231" r="1.4"/>
                    <circle cx="472" cy="244" r="1.4"/>
                    <circle cx="420" cy="288" r=".9"/>
                    <circle cx="273" cy="419" r=".9"/>
                    <circle cx="334" cy="322" r=".7"/>
                    <circle cx="291" cy="361" r=".7"/>
                    <circle cx="248" cy="399" r=".7"/>
                </g>
                <!-- axis triad -->
                <path d="M39 440L49 432" stroke="#222"/>
                <path d="M47 432l4-2-1 4z" fill="#fff" stroke="#222"/>
                <path d="M39 440L48 451" stroke="#7c9cc0"/>
                <path d="M46 451l4-2v5z" fill="#9ebfe0" stroke="#2c5a92"/>
                <circle cx="38" cy="440" r="1.5" fill="#5b86b8" stroke="#2c5a92"/>
                <text class="axis dark" x="54" y="428">Z</text>
                <text class="axis" x="38" y="438">Y</text>
                <text class="axis" x="52" y="452">X</text>
            </svg>
        </section>

        <aside class="side right">
            <button class="close" aria-label="Закрыть панель вида"><svg><use href="#i-close"/></svg></button>
            <div class="side-tools">
                <button class="more" aria-label="Вид сверху"><svg><use href="#i-vtop"/></svg></button>
                <button class="more" aria-label="Вид сбоку"><svg><use href="#i-vside"/></svg></button>
                <button class="more" aria-label="Вид спереди"><svg><use href="#i-vfront"/></svg></button>
                <button class="more" aria-label="Изометрия"><svg><use href="#i-viso"/></svg></button>
                <button class="more" aria-label="Вращение"><svg><use href="#i-spin"/></svg></button>
                <button aria-label="Отмена вида"><svg><use href="#i-vundo"/></svg></button>
                <button aria-label="Предыдущий масштаб"><svg><use href="#i-zprev"/></svg></button>
                <button class="more" aria-label="Показать всё"><svg><use href="#i-zfit"/></svg></button>
                <button class="more" aria-label="Масштаб рамкой"><svg><use href="#i-zbox"/></svg></button>
                <button class="more" aria-label="Каркас"><svg><use href="#i-wire"/></svg></button>
                <button class="active more" aria-label="Закраска"><svg><use href="#i-shade"/></svg></button>
                <button class="more" aria-label="Динамическое сечение"><svg><use href="#i-pyr"/></svg></button>
                <button aria-label="Материал"><svg><use href="#i-ball"/></svg></button>
                <button class="more" aria-label="Освещение"><svg><use href="#i-light"/></svg></button>
            </div>
        </aside>
    </main>

    <div class="levels">
        <button class="close" aria-label="Закрыть уровни"><svg><use href="#i-close"/></svg></button>
        <button class="level-icon" aria-label="Уровни"><svg><use href="#i-layers"/></svg></button>
        <div class="level-list">
            <button>0</button>
            <button>1</button>
            <button>2</button>
            <button>3</button>
            <button>4</button>
        </div>
    </div>

    <div class="status">
        <svg class="status-icon"><use href="#i-axes"/></svg>
        <div class="dropdown plane">
            <select aria-label="Рабочая плоскость"><option>Глобальная</option></select>
            <svg><use href="#i-down"/></svg>
        </div>
        <div class="dropdown layer">
            <select aria-label="Уровень"><option>0 &nbsp;: General</option></select>
            <svg><use href="#i-down"/></svg>
        </div>
        <div class="status-tools">
            <button aria-label="Плоскость XY"><svg><use href="#i-box1"/></svg></button>
            <button aria-label="Плоскость YZ"><svg><use href="#i-box2"/></svg></button>
            <button class="active" aria-label="Плоскость ZX"><svg><use href="#i-box1"/></svg></button>
            <button aria-label="Блокировка"><svg><use href="#i-lock"/></svg></button>
        </div>
        <div class="status-tools wide">
            <button class="more" aria-label="Привязки"><svg><use href="#i-bulb"/></svg></button>
            <button aria-label="Сетка"><svg><use href="#i-grid"/></svg></button>
        </div>
        <span class="blank"></span>
        <div class="coords">
            <input type="text" value="-15441" aria-label="X">
            <input type="text" value="-91987" aria-label="Y">
            <input type="text" value="0" aria-label="Z">
        </div>
        <div class="status-tools">
            <button aria-label="Список"><svg><use href="#i-list"/></svg></button>
            <button aria-label="Калькулятор"><svg><use href="#i-calc"/></svg></button>
            <button aria-label="Линейка"><svg><use href="#i-ruler"/></svg></button>
        </div>
        <button class="more" aria-label="Положение"><svg><use href="#i-snap"/></svg></button>
        <label for="tolerance">Точ</label>
        <input type="text" id="tolerance" value="0,01">
        <input type="text" id="command" placeholder="Ввести команду" aria-label="Команда">
        <div class="brand"><span>Delcam</span><svg viewBox="0 0 16 16"><circle cx="8" cy="8" r="7" fill="#226f9e" stroke="#9bd0e8" stroke-width="1.5"/><path d="M4 5h8l-3 3v4H7V8z" fill="#0f3048"/></svg></div>
    </div>

    <footer class="taskbar">
        <div class="apps">
            <button aria-label="Пуск"><svg><use href="#i-win"/></svg></button>
            <button aria-label="Калькулятор Windows"><svg><use href="#i-note"/></svg></button>
            <button aria-label="Яндекс"><svg><use href="#i-yandex"/></svg></button>
            <button class="running" aria-label="Проводник"><svg><use href="#i-folder"/></svg></button>
            <button class="running" aria-label="PowerMILL"><svg><use href="#i-pm"/></svg></button>
            <button class="running current" aria-label="PowerSHAPE"><svg><use href="#i-app"/></svg></button>
        </div>
        <div class="tray">
            <button aria-label="Скрытые значки"><svg><use href="#i-up"/></svg></button>
            <button aria-label="Сеть"><svg><use href="#i-net"/></svg></button>
            <button aria-label="Звук"><svg><use href="#i-mute"/></svg></button>
            <span class="lang">ENG</span>
            <div class="clock"><span>16:09</span><span>22.06.2022</span></div>
            <button class="notify" aria-label="Уведомления"><svg><use href="#i-msg"/></svg></button>
        </div>
    </footer>
</body>
</html>
```
FILE: styles.css
```css
* {
    box-sizing: border-box;
}
body {
    margin: 0;
    height: 100vh;
    display: flex;
    flex-direction: column;
    overflow: hidden;
    background: #f0f0f0;
    color: #222;
    font-family: Lato, Roboto, sans-serif;
    font-size: 6px;
    line-height: 8px;
}
button, input, select {
    font: inherit;
    color: inherit;
    margin: 0;
    padding: 0;
    border: none;
    background: none;
}
button {
    display: flex;
    align-items: center;
    justify-content: center;
}
button:disabled svg {
    opacity: 0.8;
}
.sprite {
    position: absolute;
    width: 0;
    height: 0;
}
.app-icon {
    width: 8px;
    height: 8px;
}

/* Title and menu */
.titlebar {
    display: flex;
    align-items: center;
    height: 10px;
    padding-left: 2px;
    gap: 1px;
    background: #fff;
}
h1 {
    margin: 0;
    font-size: 6px;
    font-weight: normal;
    white-space: nowrap;
}
.win-buttons {
    display: flex;
    margin-left: auto;
}
.win-buttons button {
    width: 21px;
    height: 10px;
}
.win-buttons svg {
    width: 5px;
    height: 5px;
}
.menubar {
    display: flex;
    align-items: center;
    height: 11px;
    padding-left: 3px;
    gap: 6px;
    background: #fff;
    border-bottom: 1px solid #c8c8c8;
}
.menubar .app-icon {
    margin-right: -3px;
}
.doc-buttons {
    display: flex;
    gap: 1px;
    margin-left: auto;
}
.doc-buttons button {
    width: 8px;
    height: 8px;
    border: 1px solid #eee;
}
.doc-buttons svg {
    width: 4px;
    height: 4px;
}

/* Toolbars */
.toolbars {
    border-bottom: 1px solid #b4b4b4;
}
.toolbar {
    display: flex;
    align-items: center;
    width: 494px;
    height: 21px;
    border-right: 1px solid #ccc;
    border-bottom: 1px solid #ccc;
}
.toolbar.second {
    width: 455px;
    border-bottom: none;
}
.toolbar button {
    width: 18px;
    height: 19px;
    flex: none;
}
.toolbar button svg,
.side-tools svg {
    width: 16px;
    height: 16px;
}
.toolbar .grip {
    width: 7px;
    height: 7px;
}
.group {
    display: flex;
    justify-content: space-between;
}
.two {
    width: 38px;
}
.three {
    width: 58px;
}
.five {
    width: 97px;
}
.seven {
    width: 135px;
}
.eight {
    width: 154px;
}
.eleven {
    width: 214px;
    margin-left: 6px;
}
.sep {
    width: 1px;
    height: 17px;
    margin: 0 2px;
    background: #ccc;
}
.active {
    background: #b9dcf3;
}
.toolbar .close,
.close {
    width: 8px;
    height: 8px;
    flex: none;
    background: #fff;
}
.toolbar .close svg,
.close svg {
    width: 6px;
    height: 6px;
}

/* Small corner mark on buttons with a flyout */
.more {
    position: relative;
}
.more::after {
    content: "";
    position: absolute;
    right: 0;
    bottom: 0;
    border: 1px solid #222;
    border-top-color: transparent;
    border-left-color: transparent;
}
.more.red::after {
    border-color: #e02020;
}

/* Work area */
main {
    display: flex;
    flex: 1;
    min-height: 0;
}
.side {
    width: 21px;
    flex: none;
}
.left {
    border-right: 1px solid #8c8c8c;
}
.left .side-tools {
    border-bottom: 1px solid #c0c0c0;
    padding-bottom: 1px;
}
.right {
    width: 22px;
    padding: 1px 0 0 1px;
    border-left: 1px solid #ddd;
}
.side-tools button {
    width: 19px;
    height: 19px;
}
.left .side-tools button {
    width: 20px;
}
.right .side-tools {
    padding-top: 1px;
}
.right .side-tools button {
    height: 20px;
}
.left .slider {
    display: block;
    width: 20px;
    height: 12px;
    border-top: 1px solid #ccc;
}
.viewport {
    flex: 1;
    min-width: 0;
    background: linear-gradient(#746f6e, #78757a 8%, #85848b 14%, #9ba3b1 29%, #aab7ce 37%, #bdcfe9 50%, #c8def6 63%, #cfe4fd 75%, #dbeafc);
}
.scene {
    display: block;
    width: 100%;
    height: 100%;
}
.axis {
    font-size: 7px;
    font-weight: bold;
    fill: #2c5a92;
}
.axis.dark {
    fill: #222;
}

/* Levels */
.levels {
    display: flex;
    align-items: center;
    height: 12px;
    border-bottom: 1px solid #ddd;
}
.level-icon {
    width: 16px;
}
.level-icon svg {
    width: 10px;
    height: 10px;
}
.level-list {
    display: flex;
    background: #b9dcf3;
}
.level-list button {
    width: 11px;
    height: 8px;
}

/* Status bar */
.status {
    display: flex;
    align-items: center;
    height: 15px;
    border-bottom: 1px solid #aaa;
}
.status button {
    width: 12px;
    height: 12px;
    flex: none;
}
.status button svg,
.status-icon {
    width: 10px;
    height: 10px;
}
.status-icon {
    margin: 0 2px 0 1px;
}
.dropdown {
    display: flex;
    align-items: center;
    height: 10px;
    margin-right: 1px;
    padding: 0 2px;
    background: #fff;
}
.dropdown select {
    flex: 1;
    min-width: 0;
    appearance: none;
    overflow: hidden;
}
.dropdown svg {
    width: 4px;
    height: 4px;
}
.plane {
    width: 39px;
}
.layer {
    width: 62px;
}
.status-tools {
    display: flex;
}
.wide {
    gap: 3px;
    margin-left: 3px;
}
.blank {
    width: 22px;
    height: 10px;
    border: 1px solid #e4e4e4;
}
.coords {
    display: flex;
    gap: 2px;
    margin: 0 2px 0 4px;
}
.coords input {
    width: 27px;
    height: 10px;
    padding: 0 3px;
    border: 1px solid #aaa;
}
.status > .more {
    margin: 0 3px;
}
#tolerance {
    width: 20px;
    height: 10px;
    margin: 0 4px 0 1px;
    padding: 0 2px;
    background: #fff;
}
#command {
    width: 77px;
    height: 10px;
    padding: 0 2px;
    background: #fff;
}
#command::placeholder {
    color: #888;
    opacity: 1;
}
.brand {
    display: flex;
    align-items: center;
    justify-content: space-between;
    width: 43px;
    height: 11px;
    margin: 0 1px 0 auto;
    padding-left: 2px;
    background: linear-gradient(90deg, #2480b6, #6db9dc);
    color: #fff;
    font-size: 9px;
}
.brand svg {
    width: 10px;
    height: 10px;
}

/* Taskbar */
.taskbar {
    display: flex;
    justify-content: space-between;
    height: 19px;
    background: linear-gradient(90deg, #2c4147, #243b47 45%, #1f3146 75%, #1b2a40);
    color: #e8edf2;
}
.apps {
    display: flex;
    gap: 1px;
}
.apps button {
    width: 22px;
    height: 19px;
    border-bottom: 1px solid transparent;
}
.apps svg {
    width: 11px;
    height: 11px;
}
.apps .running {
    border-bottom-color: #76b9ed;
}
.apps .current {
    background: #53666d;
}
.tray {
    display: flex;
    align-items: center;
    padding-right: 11px;
    gap: 3px;
}
.tray svg {
    width: 8px;
    height: 8px;
}
.lang {
    margin: 0 1px;
}
.clock {
    display: flex;
    flex-direction: column;
    align-items: center;
    margin-right: 4px;
}
.notify svg {
    width: 9px;
    height: 9px;
}
```
